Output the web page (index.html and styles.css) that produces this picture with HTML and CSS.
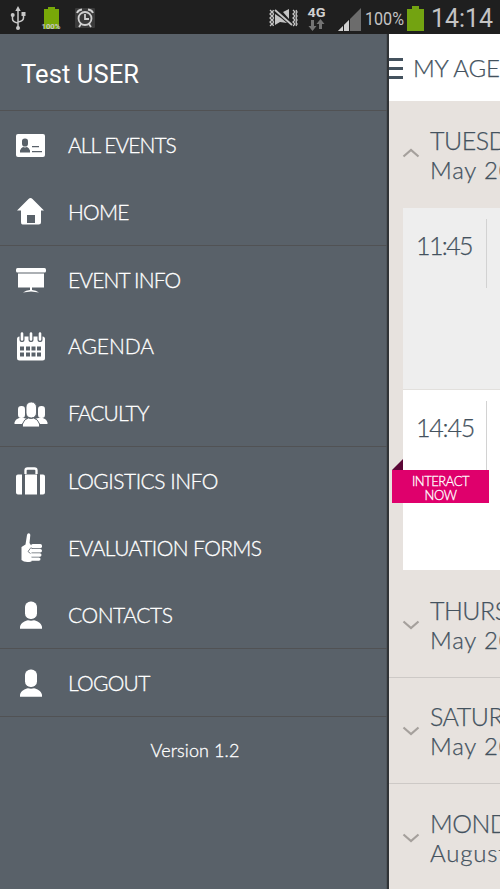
FILE: index.html
```html
<!DOCTYPE html>
<html lang="en">
<head>
<meta charset="utf-8">
<title>My Agenda</title>
<link rel="stylesheet" href="styles.css">
</head>
<body>
<svg class="defs" width="0" height="0" aria-hidden="true">
  <symbol id="person" viewBox="0 0 32 32"><rect x="10" y="2.500" width="12" height="17.500" rx="5.600"/><path d="M5 29.800v-2c1-4 5-6 8-6.500q3 .8 6 0c3 .5 7 2.500 8 6.500v2z"/></symbol>
  <symbol id="down" viewBox="0 0 18 10"><path d="M1.500 1.500l7.500 6.500 7.500-6.500" fill="none" stroke="#a5a09c" stroke-width="2.200"/></symbol>
</svg>
<header class="status">
  <svg width="500" height="34" viewBox="0 0 500 34">
    <g fill="none" stroke="#c8c8c8" stroke-width="1.500"><path d="M18 9v18M12.500 16v3q0 3 5.500 4M23.500 14v4q0 3-5.500 4"/></g>
    <g fill="#c8c8c8"><path d="M18 6l2.700 5h-5.400zM21.500 12h4v4h-4z"/><circle cx="12.700" cy="15" r="2"/><circle cx="18" cy="28" r="2"/></g>
    <path fill="#78a808" d="M48 7h7v2h4v20H44V9h4z"/>
    <rect x="75" y="8" width="20" height="20" rx="1" fill="#3a3a3a"/>
    <g fill="none" stroke="#d0d0d0" stroke-width="1.800"><circle cx="85" cy="18.500" r="6.500"/><path d="M85 14v5h4M77 13q1-3 5-3.500M93 13q-1-3-5-3.500M81 24l-2 3M89 24l2 3"/></g>
    <g fill="none" stroke="#c4c4c4" stroke-width="1.300"><path d="M270 10l2 2-2 2 2 2-2 2 2 2-2 2 2 2-2 2M273.500 10l-1 2 1 2-1 2 1 2-1 2 1 2-1 2 1 2M293 10l2 2-2 2 2 2-2 2 2 2-2 2 2 2-2 2M296 10l1 2-1 2 1 2-1 2 1 2-1 2 1 2-1 2"/></g>
    <path fill="#c4c4c4" d="M275 14l6 4 6 5-7-1-5 3zM283 12l6-3v10z"/>
    <path d="M275 10l17 15" stroke="#c4c4c4" stroke-width="1.800"/>
    <path fill="#747474" d="M311 20h3v6h2.500l-4 5-4-5h2.500zM319 29v-5h-2.500l4-5 4 5H322v5z"/>
    <path fill="#6c6c6c" d="M338 31l23-23v23z"/><path fill="#d0d0d0" d="M338 31l11-11v11z"/>
    <path d="M343.500 24v7M349.500 19v12" stroke="#1f1f1f" stroke-width="1"/>
    <path fill="#73a311" d="M412 6h7v3h5v22h-17V9h5z"/>
    <g class="sys"><text x="41.500" y="28.500" class="tiny" textLength="19" lengthAdjust="spacingAndGlyphs">100%</text><text x="307.500" y="17" class="net" textLength="18" lengthAdjust="spacingAndGlyphs">4G</text><text x="365" y="25" class="pct" textLength="39" lengthAdjust="spacingAndGlyphs">100%</text><text x="431" y="26.500" class="clock" textLength="62" lengthAdjust="spacingAndGlyphs">14:14</text></g>
  </svg>
</header>
<main class="screen">
  <nav class="drawer">
    <h1 class="user">Test USER</h1>
    <ul class="group g1">
      <li><svg class="icon" viewBox="0 0 32 32"><rect x="1" y="5" width="29" height="23" rx="2"/><g fill="#596169"><rect x="7" y="9.500" width="6" height="8" rx="2.800"/><path d="M5 23.500v-2q1-3 3-3.500 2 .8 4 0 2 .5 3 3.500v2zM17 17h7v1.200h-7zM17 22h10v1.200H17z"/></g></svg><span class="w-events">ALL EVENTS</span></li>
      <li><svg class="icon" viewBox="0 0 32 32"><path fill-rule="evenodd" d="M13.500 3q2-2 4 0L29 14.500h-3V26q0 2.500-2.500 2.500h-16Q6 28.500 6 26V14.500H2zM12 19v8h8v-8z"/></svg><span class="w-home">HOME</span></li>
    </ul>
    <ul class="group g2">
      <li><svg class="icon" viewBox="0 0 32 32"><rect x="1" y="4" width="30" height="4.500" rx="1.500"/><path d="M3 9.500h26v14H3zM15 23.500h2v2.500q4 .4 7 2.500-4-.4-8-1-4 .6-8 1 3-2.100 7-2.500z"/></svg><span class="w-info">EVENT INFO</span></li>
      <li><svg class="icon" viewBox="0 0 32 32"><rect x="2" y="6.500" width="28" height="24" rx="2.500"/><g fill="#596169"><rect x="4.500" y="2.500" width="5" height="9.500" rx="2"/><rect x="13.500" y="2.500" width="5" height="9.500" rx="2"/><rect x="22.500" y="2.500" width="5" height="9.500" rx="2"/><path d="M5 16.500h4v4H5zM11 16.500h4v4h-4zM16.500 16.500h4v4h-4zM22 16.500h4v4h-4zM5 22.500h4v4H5zM11 22.500h4v4h-4zM16.500 22.500h4v4h-4zM22 22.500h4v4h-4z"/></g><path d="M7 3.500v6M16 3.500v6M25 3.500v6" stroke="#fff" stroke-width="2.600" stroke-linecap="round"/></svg><span class="w-agenda">AGENDA</span></li>
      <li><svg class="icon wide" viewBox="0 0 34 32"><rect x="4" y="9" width="7" height="12" rx="3.300"/><rect x="24" y="9" width="7" height="12" rx="3.300"/><path d="M.5 27v-1.500q1-4 6.500-5l5 1-4 5.500zM33.500 27v-1.500q-1-4-6.500-5l-5 1 4 5.500z"/><g stroke="#596169" stroke-width=".9"><rect x="12" y="5" width="10.500" height="16" rx="5"/><path d="M8.500 30V27q1.500-5 6-6 2.500 1 5 0 4.500 1 6 6v3z"/></g></svg><span class="w-faculty">FACULTY</span></li>
    </ul>
    <ul class="group g3">
      <li><svg class="icon" viewBox="0 0 32 32"><path d="M10.500 9V5.500q0-2 2-2h7q2 0 2 2V9" fill="none" stroke="#fff" stroke-width="2.300"/><path d="M3 9.500h4v20H3q-2 0-2-2v-16q0-2 2-2zM10 9.500h12v20H10zM25 9.500h3q2 0 2 2v16q0 2-2 2h-3z"/></svg><span class="w-log">LOGISTICS INFO</span></li>
      <li><svg class="icon" viewBox="0 0 32 32"><path d="M6.500 15l4-2.500L12 3q.3-2 2-1.800 1.500.3 1.300 2L14.500 11l2 3v15.500q-7 1.500-10-1.500z"/><rect x="16" y="12" width="11" height="4.200" rx="1.700"/><rect x="14.500" y="17" width="12.500" height="3.500" rx="1.700"/><rect x="15" y="21.200" width="11.500" height="3.500" rx="1.700"/><rect x="14" y="25.400" width="11.500" height="3.300" rx="1.600"/><path d="M16 15.500l-3 4 2.500 2" fill="none" stroke="#596169" stroke-width=".8"/></svg><span class="w-eval">EVALUATION FORMS</span></li>
      <li><svg class="icon"><use href="#person"/></svg><span class="w-contacts">CONTACTS</span></li>
    </ul>
    <ul class="group g4">
      <li><svg class="icon"><use href="#person"/></svg><span class="w-logout">LOGOUT</span></li>
    </ul>
    <p class="version">Version 1.2</p>
  </nav>
  <section class="page">
    <header class="bar"><span class="burger"><i></i><i></i><i></i></span><span class="heading">MY AGENDA</span></header>
    <div class="day open"><svg class="chev up"><use href="#down"/></svg><div class="date"><b>TUESDAY</b><span>May 20</span></div></div>
    <div class="slots">
      <div class="slot muted"><time>11:45</time><i class="rule"></i></div>
      <div class="slot"><time>14:45</time><i class="rule"></i><div class="badge">INTERACT<br>NOW</div></div>
    </div>
    <div class="day first"><svg class="chev"><use href="#down"/></svg><div class="date"><b>THURSDAY</b><span>May 2014</span></div></div>
    <div class="day"><svg class="chev"><use href="#down"/></svg><div class="date"><b>SATURDAY</b><span>May 2014</span></div></div>
    <div class="day"><svg class="chev"><use href="#down"/></svg><div class="date"><b>MONDAY</b><span>August</span></div></div>
  </section>
</main>
</body>
</html>
```
FILE: styles.css
```css
* { box-sizing: border-box; }
body { margin: 0; width: 500px; height: 889px; overflow: hidden; font-family: Lato, "Liberation Sans", sans-serif; font-weight: 300; color: #44525e; }
.defs { position: absolute; }
.status { height: 34px; background: #1f1f1f; }
.status svg { display: block; }
.sys { font-family: Roboto, sans-serif; font-weight: 400; fill: #c4c4c4; }
.tiny { font-size: 7px; font-weight: 700; }
.net { font-size: 13px; font-weight: 700; fill: #d0d0d0; }
.pct { font-size: 18px; }
.clock { font-size: 26px; }
.screen { display: flex; height: 855px; }
.drawer { width: 389px; flex: none; background: #596169; border-right: 2px solid #303336; box-shadow: inset -1px 0 #50575e; color: #fff; }
.user { margin: 0; height: 77px; padding: 1px 0 0 21px; border-bottom: 1px solid #515254; font: 400 25.500px/78px Roboto, sans-serif; letter-spacing: .1px; }
.group { list-style: none; margin: 0; padding: 1px 0 0; border-bottom: 1px solid #515254; display: flex; flex-direction: column; }
.group li { flex: 1; display: flex; align-items: center; padding-left: 15px; gap: 21px; font-size: 21px; line-height: 30px; white-space: nowrap; -webkit-text-stroke: .3px #fff; }
.g1 { height: 135px; }
.g2 { height: 201px; }
.g3 { height: 202px; }
.g4 { height: 68px; }
.w-events { letter-spacing: -.95px; }
.w-home { letter-spacing: -.8px; }
.w-info { letter-spacing: -.85px; }
.w-agenda { letter-spacing: -.05px; }
.w-faculty { letter-spacing: -.9px; }
.w-log { letter-spacing: -.5px; }
.w-eval { letter-spacing: -.6px; }
.w-contacts { letter-spacing: -.45px; }
.w-logout { letter-spacing: -.7px; }
.icon { width: 32px; height: 32px; flex: none; fill: #fff; }
.wide { width: 34px; margin-left: -1px; margin-right: -1px; }
.version { margin: 20px 0 0; padding-left: 3px; text-align: center; font-size: 18px; letter-spacing: .1px; line-height: 26px; -webkit-text-stroke: .3px #fff; }
.page { width: 111px; overflow: hidden; background: #e7e2de; white-space: nowrap; -webkit-text-stroke: .25px #44525e; }
.bar { height: 67px; display: flex; align-items: center; background: #fff; }
.burger { width: 14px; flex: none; display: grid; gap: 6px; margin-top: 2px; }
.burger i { height: 3px; background: #44525e; }
.heading { margin-left: 10px; font-size: 24px; letter-spacing: -.2px; }
.day { height: 106.500px; display: flex; align-items: center; border-bottom: 1px solid #cdc9c6; padding: 2px 0 0 13px; }
.day.open { border: 0; height: 107px; padding-top: 0; }
.day.first { height: 107.500px; padding-top: 3px; }
.chev { width: 18px; height: 10px; flex: none; }
.up { transform: rotate(180deg); margin-top: -3px; }
.date { margin-left: 10px; display: grid; font-size: 25px; line-height: 30px; }
.date b { font-weight: 300; letter-spacing: -.5px; }
.date span { font-size: 24px; letter-spacing: .8px; }
.slots { margin-left: 14px; }
.slot { position: relative; height: 180px; background: #fff; padding: 11px 0 0 13px; display: flex; }
.muted { background: #eee; height: 182px; border-bottom: 1px solid #e2e0dd; }
.slot time { width: 70px; flex: none; font-size: 25px; line-height: 52px; letter-spacing: -1.200px; }
.muted time { letter-spacing: -1.600px; }
.rule { width: 1px; height: 69px; background: #d2d2d2; }
.badge { position: absolute; left: -11px; top: 80px; width: 97px; height: 33px; padding-top: 4px; background: #df006c; color: #fff; text-align: center; font-size: 13px; letter-spacing: -.45px; line-height: 14px; -webkit-text-stroke: .3px #fff; }
.badge::before { content: ""; position: absolute; left: 0; top: -11px; width: 11px; height: 11px; background: #5b0636; clip-path: polygon(100% 0, 100% 100%, 0 100%); }
```
